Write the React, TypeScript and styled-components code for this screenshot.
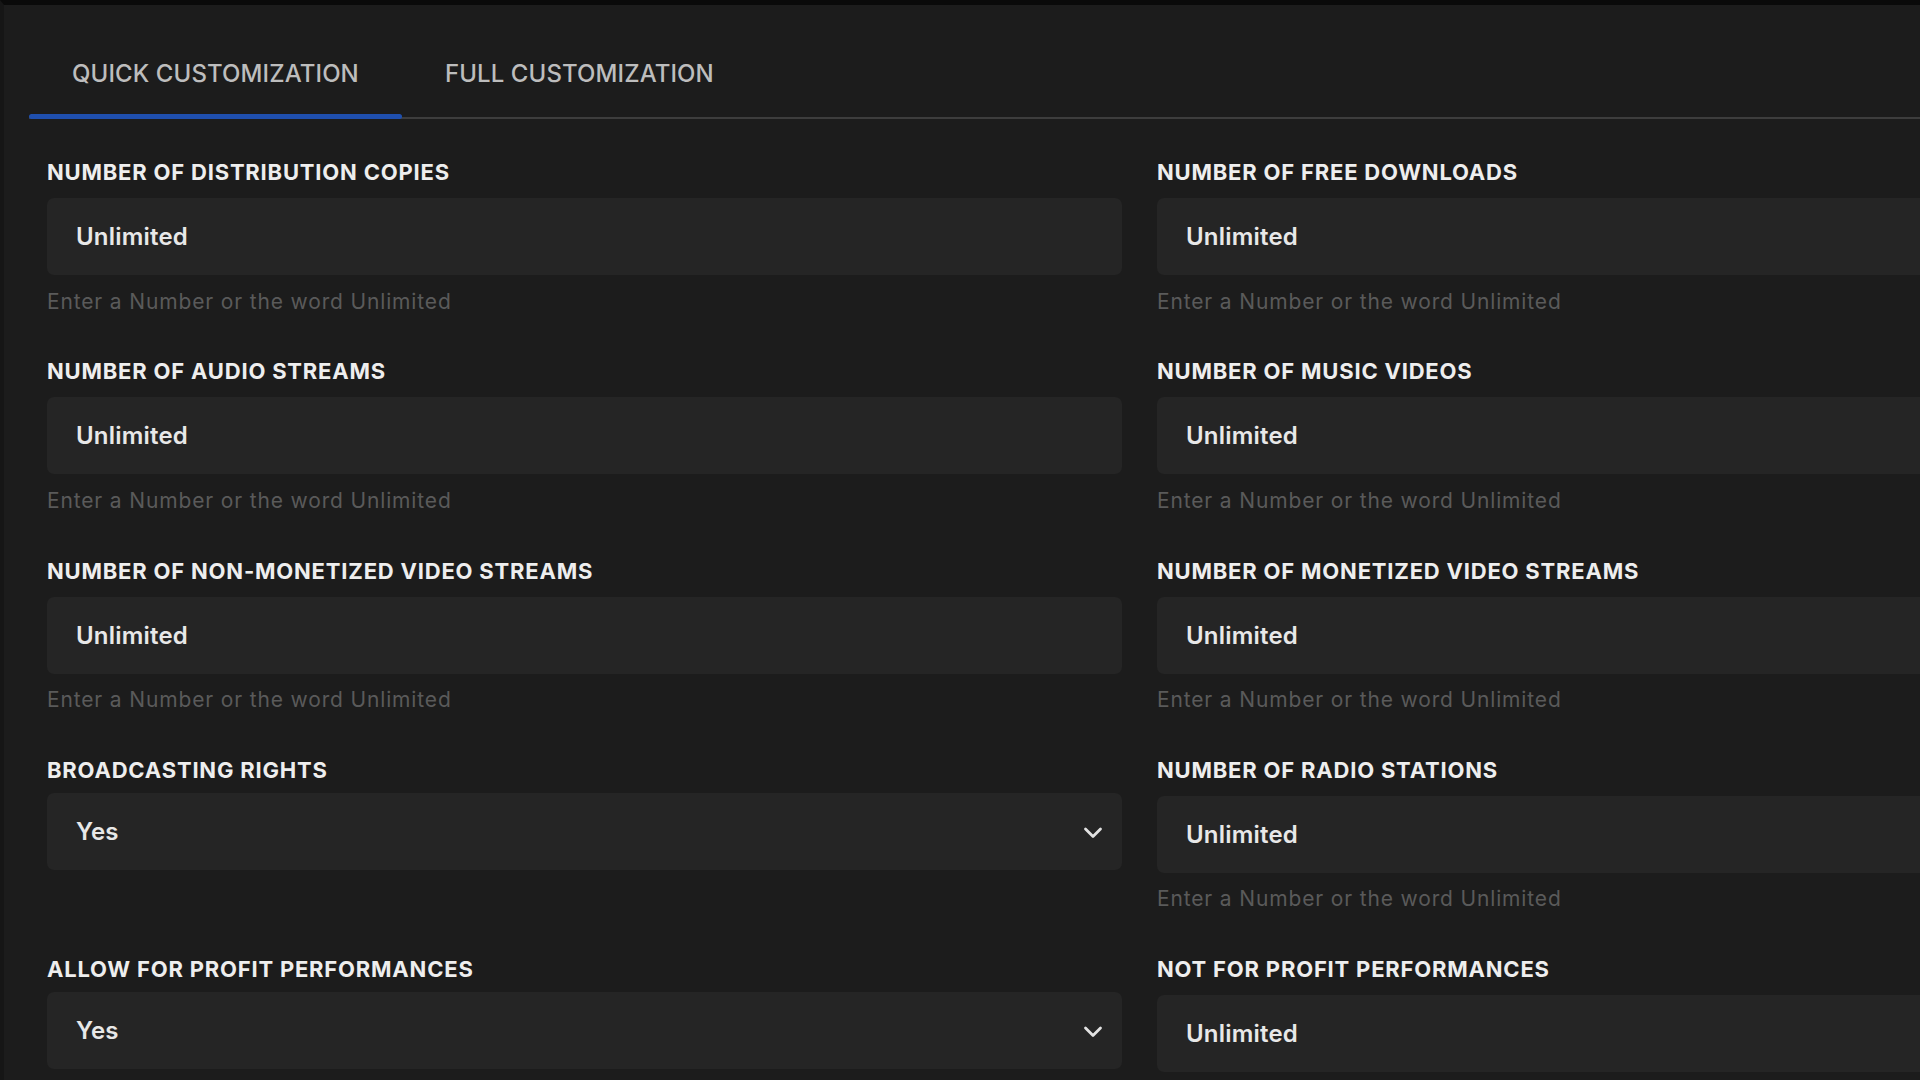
import React from "react";
import styled, { createGlobalStyle } from "styled-components";

const GlobalStyle = createGlobalStyle`
	html, body {
		margin: 0;
		padding: 0;
		background: #1c1c1c;
	}
	body {
		font-family: Inter, "Noto Sans", sans-serif;
		overflow: hidden;
	}
	* {
		box-sizing: border-box;
	}
`;

const fields = [
	{ label: "NUMBER OF DISTRIBUTION COPIES", value: "Unlimited" },
	{ label: "NUMBER OF FREE DOWNLOADS", value: "Unlimited" },
	{ label: "NUMBER OF AUDIO STREAMS", value: "Unlimited" },
	{ label: "NUMBER OF MUSIC VIDEOS", value: "Unlimited" },
	{ label: "NUMBER OF NON-MONETIZED VIDEO STREAMS", value: "Unlimited" },
	{ label: "NUMBER OF MONETIZED VIDEO STREAMS", value: "Unlimited" },
	{ label: "BROADCASTING RIGHTS", value: "Yes", select: true },
	{ label: "NUMBER OF RADIO STATIONS", value: "Unlimited" },
	{ label: "ALLOW FOR PROFIT PERFORMANCES", value: "Yes", select: true },
	{ label: "NOT FOR PROFIT PERFORMANCES", value: "Unlimited" },
];

const tabs = ["QUICK CUSTOMIZATION", "FULL CUSTOMIZATION"];

const ChevronDown = () => (
	<svg width="20" height="12" viewBox="0 0 20 12" fill="none">
		<polyline
			points="2.5,2 10,9.5 17.5,2"
			stroke="#e2e2e2"
			strokeWidth="2.8"
			strokeLinecap="round"
			strokeLinejoin="round"
		/>
	</svg>
);

const App = () => {
	return (
		<Page>
			<GlobalStyle />
			<TabBar>
				{tabs.map((t, i) => (
					<Tab key={t} $active={i === 0}>
						{t}
					</Tab>
				))}
			</TabBar>
			<Form>
				{fields.map((f) => (
					<Field key={f.label}>
						<Label $tight={!!f.select}>{f.label}</Label>
						{f.select ? (
							<SelectBox>
								<span>{f.value}</span>
								<ChevronDown />
							</SelectBox>
						) : (
							<>
								<Input readOnly defaultValue={f.value} />
								<Hint>Enter a Number or the word Unlimited</Hint>
							</>
						)}
					</Field>
				))}
			</Form>
		</Page>
	);
};
export default App;

const Page = styled.div`
	width: 100vw;
	height: 100vh;
	overflow: hidden;
	background: #1c1c1c;
	border-top: 5px solid #0a0a0a;
	border-left: 4px solid #161616;
`;
const TabBar = styled.div`
	display: flex;
	margin-left: 25px;
	padding-top: 24px;
	border-bottom: 2px solid #3d3d3d;
`;
const Tab = styled.div<{ $active?: boolean }>`
	position: relative;
	display: flex;
	align-items: center;
	height: 88px;
	padding: 0 43px;
	font-size: 24px;
	font-weight: 500;
	letter-spacing: 0.1px;
	color: #bdbdbd;
	white-space: nowrap;
	&::after {
		content: "";
		display: ${(p) => (p.$active ? "block" : "none")};
		position: absolute;
		left: 0;
		right: 0;
		bottom: -2px;
		height: 5px;
		border-radius: 3px;
		background: #1f4fae;
	}
`;
const Form = styled.div`
	display: grid;
	grid-template-columns: 1075px 1075px;
	grid-auto-rows: 199.25px;
	column-gap: 35px;
	padding: 38px 0 0 43px;
`;
const Field = styled.div`
	display: flex;
	flex-direction: column;
`;
const Label = styled.div<{ $tight?: boolean }>`
	font-size: 22px;
	line-height: 30px;
	font-weight: 700;
	letter-spacing: 0.8px;
	color: #eeeeee;
	margin-bottom: ${(p) => (p.$tight ? "8px" : "11px")};
	white-space: nowrap;
`;
const Input = styled.input`
	height: 77px;
	width: 100%;
	border: none;
	outline: none;
	border-radius: 7px;
	background: #252525;
	padding: 0 29px;
	font-family: inherit;
	font-size: 24px;
	font-weight: 600;
	letter-spacing: 0.2px;
	color: #e8e8e8;
`;
const SelectBox = styled.div`
	display: flex;
	align-items: center;
	justify-content: space-between;
	height: 77px;
	border-radius: 7px;
	background: #252525;
	padding: 0 19px 0 29px;
	font-size: 24px;
	font-weight: 600;
	letter-spacing: 0.2px;
	color: #e8e8e8;
	svg {
		margin-top: 3px;
	}
`;
const Hint = styled.div`
	margin-top: 12.5px;
	font-size: 21px;
	line-height: 28px;
	letter-spacing: 0.85px;
	color: #5a5a5a;
	white-space: nowrap;
`;
